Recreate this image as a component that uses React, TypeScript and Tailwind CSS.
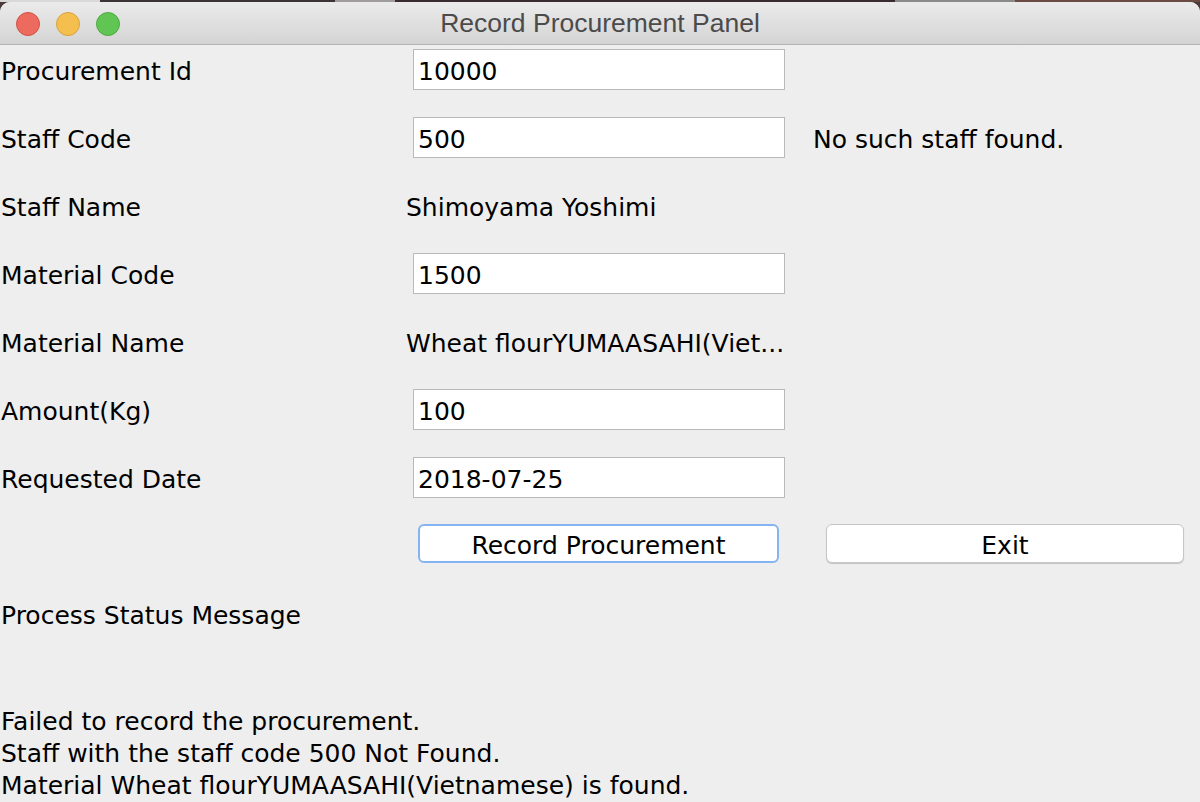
import React from 'react';

const FONT = { fontFamily: '"DejaVu Sans", "Liberation Sans", sans-serif' };

const rows: { label: string; value: string; field: boolean; note?: string }[] = [
  { label: 'Procurement Id', value: '10000', field: true },
  { label: 'Staff Code', value: '500', field: true, note: 'No such staff found.' },
  { label: 'Staff Name', value: 'Shimoyama Yoshimi', field: false },
  { label: 'Material Code', value: '1500', field: true },
  { label: 'Material Name', value: 'Wheat flourYUMAASAHI(Viet...', field: false },
  { label: 'Amount(Kg)', value: '100', field: true },
  { label: 'Requested Date', value: '2018-07-25', field: true },
];

const TrafficLight: React.FC<{ bg: string; border: string }> = ({ bg, border }) => (
  <div
    className="w-[24px] h-[24px] rounded-full border"
    style={{ backgroundColor: bg, borderColor: border }}
  />
);

const App: React.FC = () => {
  return (
    <div className="w-[1200px] h-[802px] overflow-hidden bg-[#4a3b3b] flex flex-col">
      {/* desktop peeking above the window */}
      <div className="h-[2px] flex shrink-0">
        <div className="w-[100px] bg-[#d8d8d8]" />
        <div className="w-[235px] bg-[#3c3434]" />
        <div className="w-[60px] bg-[#a09c9c]" />
        <div className="w-[500px] bg-[#3a2c2e]" />
        <div className="w-[120px] bg-[#8a8a8a]" />
        <div className="flex-1 bg-[#6b4a44]" />
      </div>

      <div className="flex-1 flex flex-col bg-[#eeeeee] rounded-t-[10px] overflow-hidden">
        {/* title bar */}
        <div className="h-[43px] shrink-0 bg-gradient-to-b from-[#ebebeb] to-[#d4d4d4] border-b border-[#b4b4b4] flex items-center relative">
          <div className="flex items-center gap-[16px] pl-[16px] pt-[1px]">
            <TrafficLight bg="#ec6a5e" border="#d35247" />
            <TrafficLight bg="#f5bf4f" border="#d9a13c" />
            <TrafficLight bg="#61c554" border="#4fa940" />
          </div>
          <div
            className="absolute inset-0 flex items-center justify-center pt-[2px] text-[26.5px] text-[#4b4b4b]"
            style={{ fontFamily: '"Liberation Sans", Arial, sans-serif' }}
          >
            Record Procurement Panel
          </div>
        </div>

        {/* form */}
        <div className="flex flex-col pt-[4px] text-[25px] text-black" style={FONT}>
          <div className="flex flex-col gap-[27px]">
            {rows.map((r) => (
              <div key={r.label} className="flex items-center h-[41px]">
                <div className="w-[413px] pl-[1px] pt-[4px] shrink-0">{r.label}</div>
                {r.field ? (
                  <div className="w-[372px] h-[41px] bg-white border border-[#b9b9b9] pl-[4px] pt-[5px] flex items-center shrink-0">
                    {r.value}
                  </div>
                ) : (
                  <div className="w-[372px] -ml-[7px] pt-[4px] shrink-0 whitespace-nowrap">{r.value}</div>
                )}
                {r.note && <div className="pl-[28px] pt-[4px] whitespace-nowrap">{r.note}</div>}
              </div>
            ))}
          </div>

          <div className="flex items-center pt-[26px] pl-[418px] gap-[47px]">
            <button className="w-[361px] h-[39px] pt-[4px] bg-white rounded-[6px] border-2 border-[#86b4f2] flex items-center justify-center">
              Record Procurement
            </button>
            <button className="w-[358px] h-[39px] pt-[4px] bg-white rounded-[6px] border border-[#c6c6c6] shadow-[0_1px_1px_rgba(0,0,0,0.18)] flex items-center justify-center">
              Exit
            </button>
          </div>

          <div className="h-[41px] mt-[30px] pl-[1px] pt-[4px] flex items-center">Process Status Message</div>

          <div className="mt-[72px] pl-[1px] flex flex-col leading-[32px]">
            <div>Failed to record the procurement.</div>
            <div>Staff with the staff code 500 Not Found.</div>
            <div>Material Wheat flourYUMAASAHI(Vietnamese) is found.</div>
          </div>
        </div>
      </div>
    </div>
  );
};

export default App;
